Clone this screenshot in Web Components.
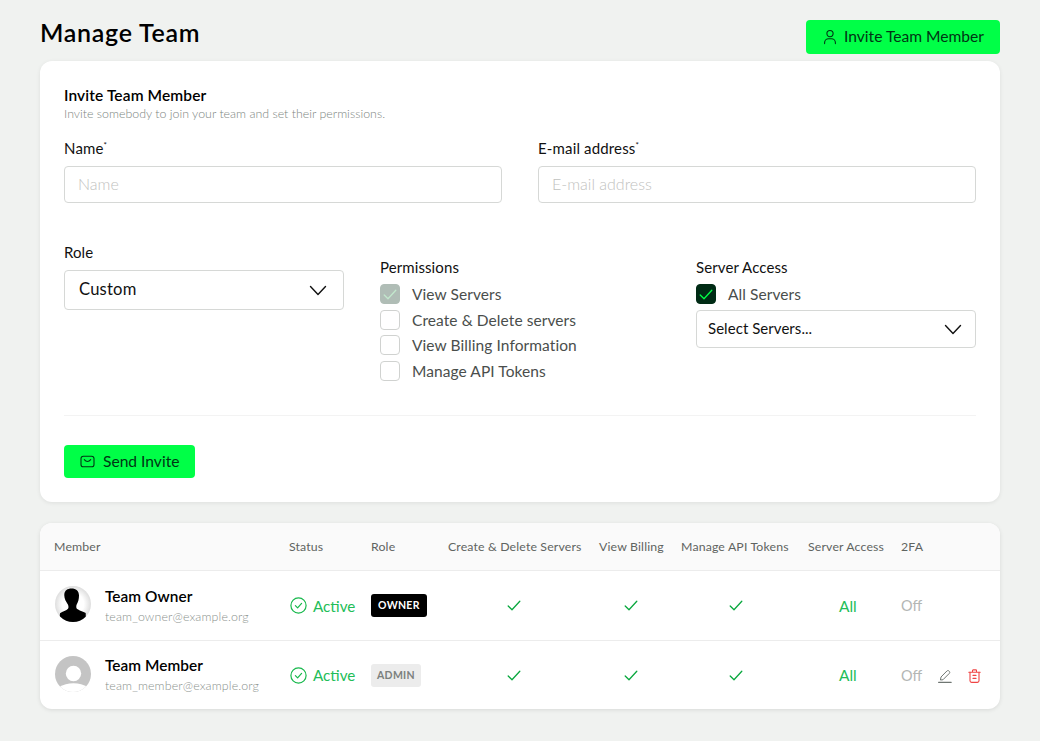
<!DOCTYPE html>
<html lang="en">
<head>
<meta charset="utf-8">
<title>Manage Team</title>
<style>
  html, body { margin: 0; background: #f0f2f0; }
  body { font-family: Lato, "Noto Sans", sans-serif; color: #000; }
</style>
</head>
<body>
<team-page>
  <page-header>
    <span slot="title">Manage Team</span>
    <green-button icon="user" size="top">Invite Team Member</green-button>
  </page-header>

  <invite-form>
    <span slot="title">Invite Team Member</span>
    <span slot="sub">Invite somebody to join your team and set their permissions.</span>
    <text-field slot="fields" label="Name" placeholder="Name"></text-field>
    <text-field slot="fields" label="E-mail address" placeholder="E-mail address"></text-field>

    <form-column slot="role" label="Role">
      <select-box big value="Custom"></select-box>
    </form-column>
    <form-column slot="perms" label="Permissions" low>
      <check-box state="locked">View Servers</check-box>
      <check-box>Create &amp; Delete servers</check-box>
      <check-box>View Billing Information</check-box>
      <check-box>Manage API Tokens</check-box>
    </form-column>
    <form-column slot="access" label="Server Access" low>
      <check-box state="on">All Servers</check-box>
      <select-box value="Select Servers..."></select-box>
    </form-column>

    <green-button slot="action" icon="mail" size="send">Send Invite</green-button>
  </invite-form>

  <team-table>
    <team-row name="Team Owner" email="team_owner@example.org" avatar="owner" role="OWNER"></team-row>
    <team-row name="Team Member" email="team_member@example.org" avatar="member" role="ADMIN" actions></team-row>
  </team-table>
</team-page>

<script>
const ICONS = {
  user: `<svg width="16" height="16" viewBox="0 0 16 16" fill="none" stroke="currentColor" stroke-width="1.1" stroke-linecap="round"><circle cx="8" cy="4.6" r="3.1"/><path d="M2.6 14.6v-.8c0-2.200 1.800-4 4-4h2.800c2.200 0 4 1.800 4 4v.8"/></svg>`,
  mail: `<svg width="15" height="15" viewBox="0 0 15 15" fill="none" stroke="currentColor" stroke-width="1.1" stroke-linecap="round" stroke-linejoin="round"><rect x="1" y="2.2" width="13" height="10.600" rx="2.4"/><path d="M4.300 5.600c1 1.300 2 1.900 3.200 1.900s2.200-.6 3.200-1.900"/></svg>`,
  chevron: `<svg width="18" height="11" viewBox="0 0 18 11" fill="none" stroke="currentColor" stroke-width="1.4" stroke-linecap="round" stroke-linejoin="round"><path d="M1.500 1.500 9 9.500l7.500-8"/></svg>`,
  tick: `<svg width="14" height="11" viewBox="0 0 14 11" fill="none" stroke="currentColor" stroke-width="1.3" stroke-linecap="round" stroke-linejoin="round"><path d="M1.200 6 5 9.700 12.800 1.300"/></svg>`,
  circleCheck: `<svg width="17" height="17" viewBox="0 0 17 17" fill="none" stroke="currentColor" stroke-width="1.2" stroke-linecap="round" stroke-linejoin="round"><circle cx="8.500" cy="8.500" r="7.600"/><path d="M5.400 8.700l2.200 2.200 4-4.500"/></svg>`,
  pencil: `<svg width="14" height="14" viewBox="0 0 14 14" fill="none" stroke="currentColor" stroke-width="1" stroke-linecap="round" stroke-linejoin="round"><path d="M2.500 10.600 3 8 8.900 2c.6-.6 1.500-.6 2.100 0l.3.300c.6.600.6 1.500 0 2.100L5.200 10.500z"/><path d="M.6 13.300h12.600" stroke-width="1.200"/></svg>`,
  trash: `<svg width="13" height="14" viewBox="0 0 13 14" fill="none" stroke="currentColor" stroke-width="1.100" stroke-linecap="round" stroke-linejoin="round"><path d="M.8 3.200h11.400M4.500 3V1.600c0-.4.300-.7.700-.7h2.600c.4 0 .7.300.7.700V3"/><path d="M2 3.200v8.600c0 .9.700 1.600 1.600 1.600h5.800c.9 0 1.600-.7 1.600-1.600V3.200"/><path d="M5 6.400h3M5 9.400h3"/></svg>`
};

class TeamPage extends HTMLElement {
  constructor() {
    super();
    this.attachShadow({ mode: "open" });
    this.shadowRoot.innerHTML = `
    <style>
      :host { display: flex; flex-direction: column; gap: 21px; padding: 20px 40px 32px; }
    </style>
    <slot></slot>`;
  }
}

class PageHeader extends HTMLElement {
  constructor() {
    super();
    this.attachShadow({ mode: "open" });
    this.shadowRoot.innerHTML = `
    <style>
      :host { display: flex; justify-content: space-between; align-items: flex-start; margin-bottom: -14px; }
      h1 { margin: 0; font-size: 25px; line-height: 25px; font-weight: 600; letter-spacing: .72px; }
    </style>
    <h1><slot name="title"></slot></h1>
    <slot></slot>`;
  }
}

class GreenButton extends HTMLElement {
  constructor() {
    super();
    this.attachShadow({ mode: "open" });
    const big = this.getAttribute("size") === "top";
    this.shadowRoot.innerHTML = `
    <style>
      :host { display: inline-flex; align-items: center; background: #00ff47; color: #003514;
        border-radius: 4px; box-sizing: border-box; height: ${big ? 34 : 33}px; padding: 0 0 0 16px;
        gap: ${big ? 6 : 8}px; width: ${big ? 194 : 131}px; font-size: 15.6px; white-space: nowrap; }
      svg { display: block; flex: none; }
      span { position: relative; top: -1px; }
    </style>
    ${ICONS[this.getAttribute("icon")]}<span><slot></slot></span>`;
  }
}

class InviteForm extends HTMLElement {
  constructor() {
    super();
    this.attachShadow({ mode: "open" });
    this.shadowRoot.innerHTML = `
    <style>
      :host { display: block; background: #fff; border-radius: 12px; padding: 24px;
        box-shadow: 0 1px 4px rgba(0,0,0,.08); }
      .title { font-size: 15.5px; line-height: 21px; font-weight: 600; letter-spacing: .12px; }
      .sub { font-size: 12.4px; line-height: 16px; color: #7d8681; font-weight: 300; }
      .fields { display: grid; grid-template-columns: 1fr 1fr; gap: 36px; margin-top: 16px; }
      .opts { display: grid; grid-template-columns: repeat(3, 1fr); gap: 36px; margin-top: 42px; }
      hr { border: 0; border-top: 1px solid #f3f3f3; margin: 29px 0 29px; }
    </style>
    <div class="title"><slot name="title"></slot></div>
    <div class="sub"><slot name="sub"></slot></div>
    <div class="fields"><slot name="fields"></slot></div>
    <div class="opts"><slot name="role"></slot><slot name="perms"></slot><slot name="access"></slot></div>
    <hr>
    <slot name="action"></slot>`;
  }
}

class TextField extends HTMLElement {
  constructor() {
    super();
    this.attachShadow({ mode: "open" });
    this.shadowRoot.innerHTML = `
    <style>
      :host { display: block; }
      label { display: block; font-size: 15px; line-height: 20px; margin-bottom: 8px; letter-spacing: .15px; color: #111; }
      sup { font-size: 8px; line-height: 0; }
      .box { box-sizing: border-box; height: 37px; border: 1px solid #d6d8d6; border-radius: 4px;
        padding: 0 13px 2px; display: flex; align-items: center; font-size: 16px; font-weight: 300; color: #bfc2c0; }
    </style>
    <label>${this.getAttribute("label")}<sup>*</sup></label>
    <div class="box">${this.getAttribute("placeholder")}</div>`;
  }
}

class FormColumn extends HTMLElement {
  constructor() {
    super();
    this.attachShadow({ mode: "open" });
    this.shadowRoot.innerHTML = `
    <style>
      :host { display: flex; flex-direction: column; }
      :host([low]) { padding-top: 15px; }
      .label { font-size: 15px; line-height: 17px; margin-bottom: 8px; color: #111; letter-spacing: .1px; position: relative; top: -1px; }
      :host([low]) .label { margin-bottom: 7px; }
    </style>
    <div class="label">${this.getAttribute("label")}</div>
    <slot></slot>`;
  }
}

class SelectBox extends HTMLElement {
  constructor() {
    super();
    this.attachShadow({ mode: "open" });
    this.shadowRoot.innerHTML = `
    <style>
      :host { display: flex; align-items: center; justify-content: space-between; box-sizing: border-box;
        height: 38px; border: 1px solid #d6d8d6; border-radius: 4px; padding: 0 13px 0 11px; font-size: 15px; color: #111; letter-spacing: .05px; }
      :host([big]) { height: 40px; padding: 0 16px 0 14px; font-size: 16.6px; letter-spacing: .2px; }
      svg { display: block; }
      span { position: relative; top: -1px; }
    </style>
    <span>${this.getAttribute("value")}</span>${ICONS.chevron}`;
  }
}

class CheckBox extends HTMLElement {
  constructor() {
    super();
    this.attachShadow({ mode: "open" });
    this.shadowRoot.innerHTML = `
    <style>
      :host { display: flex; align-items: center; gap: 12px; height: 20px; margin-bottom: 5.5px;
        font-size: 15.5px; color: #4a4e4c; letter-spacing: .08px; }
      .box { box-sizing: border-box; width: 20px; height: 20px; border: 1px solid #d0d2d0; border-radius: 4px;
        display: flex; align-items: center; justify-content: center; color: transparent; flex: none; }
      :host([state="on"]) .box { background: #002b15; border-color: #002b15; color: #00ff47; }
      :host([state="locked"]) .box { background: #b0bdb6; border-color: #b0bdb6; color: #c3e8cd; }
      :host([state="on"]) { margin-bottom: 6px; }
    </style>
    <span class="box">${ICONS.tick}</span><span><slot></slot></span>`;
  }
}

class TeamTable extends HTMLElement {
  constructor() {
    super();
    this.attachShadow({ mode: "open" });
    this.shadowRoot.innerHTML = `
    <style>
      :host { display: block; background: #fff; border-radius: 12px; overflow: hidden;
        box-shadow: 0 1px 4px rgba(0,0,0,.1);
        --cols: 235px 82px 77px 151px 82px 127px 93px 99px; }
      .head { display: grid; grid-template-columns: var(--cols); padding-left: 14px; height: 47px;
        align-items: center; background: #fafafa; border-bottom: 1px solid #ececec;
        font-size: 12.3px; color: #5f6461; letter-spacing: .15px; }
    </style>
    <div class="head">
      <span>Member</span><span>Status</span><span>Role</span><span>Create &amp; Delete Servers</span>
      <span>View Billing</span><span>Manage API Tokens</span><span>Server Access</span><span>2FA</span>
    </div>
    <slot></slot>`;
  }
}

class TeamRow extends HTMLElement {
  constructor() {
    super();
    this.attachShadow({ mode: "open" });
    const avatar = this.getAttribute("avatar");
    const isOwner = avatar === "owner";
    const pic = isOwner
      ? `<svg width="36" height="36" viewBox="0 0 36 36"><defs><radialGradient id="o"><stop offset=".6" stop-color="#fff"/><stop offset="1" stop-color="#dedede"/></radialGradient><clipPath id="c"><circle cx="18" cy="18" r="18"/></clipPath></defs><g clip-path="url(#c)"><rect width="36" height="36" fill="url(#o)"/><path d="M16.500 2.500c4.500 0 7.500 2.500 7.500 7 0 3.500-.8 6.500-2.300 9-.6 1.400-.6 3.300.2 4.300 1.600 1.600 6.600 2.700 8.800 4.200L31 37H4l1-9.800c2.400-1.700 6.600-2.700 8-4.400.7-1.100.6-3-.1-4.300C10.900 15.500 9 12.500 9.300 8.500 9.500 4.500 12.500 2.500 16.500 2.500z" fill="#000"/></g></svg>`
      : `<svg width="36" height="36" viewBox="0 0 36 36"><defs><clipPath id="c"><circle cx="18" cy="18" r="18"/></clipPath></defs><g clip-path="url(#c)"><rect width="36" height="36" fill="#c4c4c4"/><circle cx="18.500" cy="17.500" r="7.700" fill="#fff"/><path d="M-1 37 3.500 31.500C8.500 28.500 13 27.200 18.500 27.200S28.500 28.500 33 31.500L37 37z" fill="#fff"/></g></svg>`;
    this.shadowRoot.innerHTML = `
    <style>
      :host { display: grid; grid-template-columns: var(--cols); padding-left: 14px; height: 68px;
        align-items: center; font-size: 15.5px; }
      :host(:not(:last-child)) { height: 70px; box-sizing: border-box; border-bottom: 1px solid #ececec; }
      .member { display: flex; align-items: center; gap: 14px; padding-left: 1px; }
      .member svg { display: block; flex: none; margin-bottom: 3px; }
      .name { font-size: 15.4px; line-height: 19px; font-weight: 600; letter-spacing: .05px; }
      .mail { font-size: 12.4px; line-height: 17px; color: #8a918d; letter-spacing: .13px; margin-top: 2px; font-weight: 300; }
      .status { display: flex; align-items: center; gap: 6px; color: #22bd58; padding-left: 1px; font-size: 15.2px; }
      .status svg { display: block; color: #17b84c; }
      .badge { justify-self: start; font-size: 10.5px; font-weight: 700; letter-spacing: .3px; line-height: 23px;
        padding: 0 7px; border-radius: 3px; }
      .owner { background: #000; color: #fff; }
      .admin { background: #ececec; color: #7b807d; padding: 0 6px; }
      .tick { display: flex; justify-content: center; color: #0aa83f; }
      .create { padding-right: 19px; }
      .bill { padding-right: 19px; box-sizing: border-box; }
      .api { padding-right: 18px; }
      .tick svg { display: block; }
      .all { color: #22bd58; padding-left: 31px; }
      .off { color: #b3b6b4; display: flex; align-items: center; font-size: 14.5px; }
      .acts { display: flex; align-items: center; margin-left: 16px; gap: 16px; position: relative; top: 1px; }
      .acts svg { display: block; }
      .pen { color: #6f7672; }
      .bin { color: #ef4444; }
    </style>
    <div class="member">${pic}<div><div class="name">${this.getAttribute("name")}</div><div class="mail">${this.getAttribute("email")}</div></div></div>
    <div class="status">${ICONS.circleCheck}<span>Active</span></div>
    <span class="badge ${isOwner ? "owner" : "admin"}">${this.getAttribute("role")}</span>
    <div class="tick create">${ICONS.tick}</div>
    <div class="tick bill">${ICONS.tick}</div>
    <div class="tick api">${ICONS.tick}</div>
    <div class="all">All</div>
    <div class="off">Off${this.hasAttribute("actions") ? `<span class="acts"><span class="pen">${ICONS.pencil}</span><span class="bin">${ICONS.trash}</span></span>` : ""}</div>`;
  }
}

customElements.define("team-page", TeamPage);
customElements.define("page-header", PageHeader);
customElements.define("green-button", GreenButton);
customElements.define("invite-form", InviteForm);
customElements.define("text-field", TextField);
customElements.define("form-column", FormColumn);
customElements.define("select-box", SelectBox);
customElements.define("check-box", CheckBox);
customElements.define("team-table", TeamTable);
customElements.define("team-row", TeamRow);
</script>
</body>
</html>
